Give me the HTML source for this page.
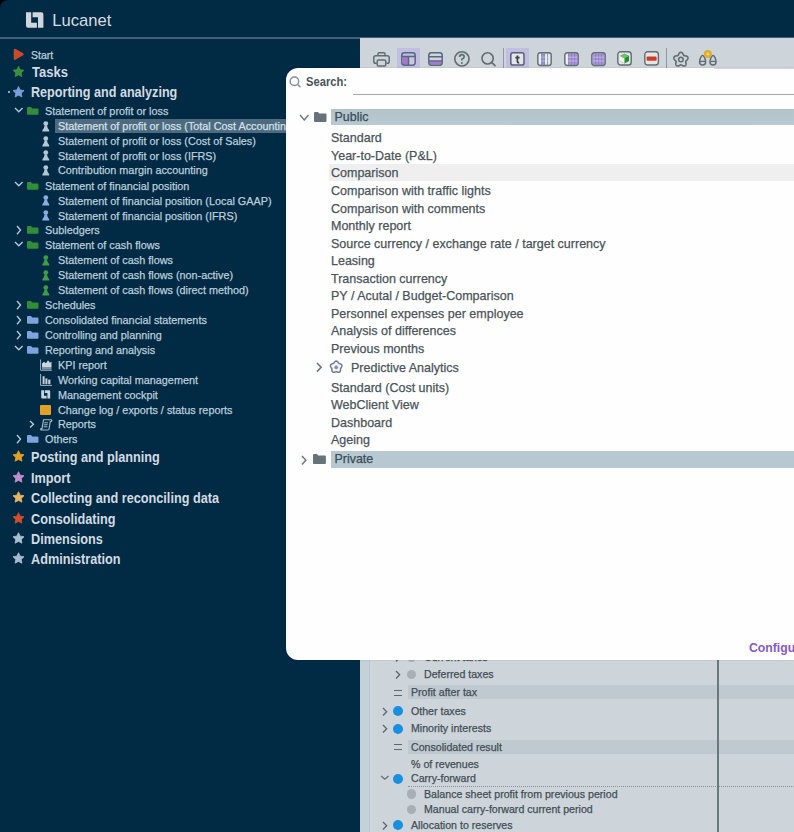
<!DOCTYPE html><html><head><meta charset="utf-8"><style>
html,body{margin:0;padding:0;background:#000;}
body{width:794px;height:832px;overflow:hidden;position:relative;font-family:"Liberation Sans",sans-serif;}
.root{position:absolute;left:0;top:0;width:794px;height:832px;background:#012a44;border-top-left-radius:8px;overflow:hidden;}
.t{position:absolute;white-space:nowrap;-webkit-text-stroke:0.25px currentColor;}
.a{position:absolute;overflow:visible;}
.r{position:absolute;}
</style></head><body><div class="root">
<svg class="a" style="left:25px;top:11px" width="20" height="18" viewBox="0 0 20 18"><path d="M1,1.3 L6.2,1.3 L6.2,11.7 L11.9,11.7 L11.9,16.8 L3,16.8 Q1,16.8 1,14.8 Z" fill="#d0d6db"/><path d="M7.6,1.3 L16.4,1.3 Q18.4,1.3 18.4,3.3 L18.4,16.8 L13,16.8 L13,6.3 L7.6,6.3 Z" fill="#d0d6db"/></svg>
<div class="t" style="left:52.3px;top:11.0px;font-size:16.6px;line-height:20px;color:#d6dde2;font-weight:400;-webkit-text-stroke:0;letter-spacing:0px">Lucanet</div>
<div class="r" style="left:0;top:37px;width:794px;height:1.5px;background:#3e5f77"></div>
<svg class="a" style="left:13px;top:48px" width="12" height="13" viewBox="0 0 12 13"><path d="M1.8,1.8 L9.6,6.3 L1.8,10.8 Z" fill="#c9492b" stroke="#c9492b" stroke-width="2.2" stroke-linejoin="round"/></svg>
<div class="t" style="left:31px;top:47.5px;font-size:10.5px;line-height:15px;color:#bdcfdc;font-weight:400;">Start</div>
<svg class="a" style="left:0;top:0" width="794" height="832"><polygon points="18.50,66.20 20.20,69.65 24.02,70.21 21.26,72.90 21.91,76.69 18.50,74.90 15.09,76.69 15.74,72.90 12.98,70.21 16.80,69.65" fill="#3a9040" stroke="#3a9040" stroke-width="0.8" stroke-linejoin="round"/></svg>
<div class="t" style="left:31.5px;top:62.0px;font-size:14px;line-height:20px;color:#d3dbe1;font-weight:700;-webkit-text-stroke:0;transform:scaleX(0.93);transform-origin:0 0;">Tasks</div>
<svg class="a" style="left:0;top:0" width="794" height="832"><polygon points="18.50,86.50 20.20,89.95 24.02,90.51 21.26,93.20 21.91,96.99 18.50,95.20 15.09,96.99 15.74,93.20 12.98,90.51 16.80,89.95" fill="#7aa0d8" stroke="#7aa0d8" stroke-width="0.8" stroke-linejoin="round"/></svg>
<div class="t" style="left:31px;top:82.0px;font-size:14px;line-height:20px;color:#d3dbe1;font-weight:700;-webkit-text-stroke:0;transform:scaleX(0.9);transform-origin:0 0;">Reporting and analyzing</div>
<div class="r" style="left:8px;top:91px;width:1.5px;height:1.5px;background:#9ab"></div>
<svg class="a" style="left:13.8px;top:106.7px" width="9.6" height="6.2" viewBox="0 0 9.6 6.2"><polyline points="1,1 4.8,4.7 8.6,1" fill="none" stroke="#b4c8d6" stroke-width="1.4"/></svg>
<svg class="a" style="left:26.5px;top:107.1px" width="11.5" height="7.7" viewBox="0 0 11.5 7.7"><path d="M0,1 Q0,0 1,0 L4,0 L5.2,1.5 L10.5,1.5 Q11.5,1.5 11.5,2.5 L11.5,6.7 Q11.5,7.7 10.5,7.7 L1,7.7 Q0,7.7 0,6.7 Z" fill="#308d38"/></svg>
<div class="t" style="left:44.6px;top:103.3px;font-size:11.4px;line-height:16px;color:#bdcfdc;font-weight:400;transform:scaleX(0.95);transform-origin:0 0;">Statement of profit or loss</div>
<div class="r" style="left:55px;top:118.5px;width:240px;height:14.6px;background:#4d6a7f"></div>
<div class="t" style="left:57.9px;top:118.3px;font-size:11.4px;line-height:16px;color:#d3e0ea;font-weight:400;transform:scaleX(0.95);transform-origin:0 0;">Statement of profit or loss (Total Cost Accounting)</div>
<svg class="a" style="left:41.5px;top:120.8px" width="8" height="11" viewBox="0 0 8 11"><circle cx="3.8" cy="2.6" r="2.4" fill="#b3c6d4"/><path d="M2.6,4.6 L5,4.6 Q5.2,7 7.2,9.2 L7.2,10.6 L0.4,10.6 L0.4,9.2 Q2.4,7 2.6,4.6 Z" fill="#b3c6d4"/></svg>
<div class="t" style="left:57.9px;top:133.3px;font-size:11.4px;line-height:16px;color:#bdcfdc;font-weight:400;transform:scaleX(0.95);transform-origin:0 0;">Statement of profit or loss (Cost of Sales)</div>
<svg class="a" style="left:41.5px;top:135.8px" width="8" height="11" viewBox="0 0 8 11"><circle cx="3.8" cy="2.6" r="2.4" fill="#b3c6d4"/><path d="M2.6,4.6 L5,4.6 Q5.2,7 7.2,9.2 L7.2,10.6 L0.4,10.6 L0.4,9.2 Q2.4,7 2.6,4.6 Z" fill="#b3c6d4"/></svg>
<div class="t" style="left:57.9px;top:147.8px;font-size:11.4px;line-height:16px;color:#bdcfdc;font-weight:400;transform:scaleX(0.95);transform-origin:0 0;">Statement of profit or loss (IFRS)</div>
<svg class="a" style="left:41.5px;top:150.3px" width="8" height="11" viewBox="0 0 8 11"><circle cx="3.8" cy="2.6" r="2.4" fill="#b3c6d4"/><path d="M2.6,4.6 L5,4.6 Q5.2,7 7.2,9.2 L7.2,10.6 L0.4,10.6 L0.4,9.2 Q2.4,7 2.6,4.6 Z" fill="#b3c6d4"/></svg>
<div class="t" style="left:57.9px;top:162.3px;font-size:11.4px;line-height:16px;color:#bdcfdc;font-weight:400;transform:scaleX(0.95);transform-origin:0 0;">Contribution margin accounting</div>
<svg class="a" style="left:41.5px;top:164.8px" width="8" height="11" viewBox="0 0 8 11"><circle cx="3.8" cy="2.6" r="2.4" fill="#b3c6d4"/><path d="M2.6,4.6 L5,4.6 Q5.2,7 7.2,9.2 L7.2,10.6 L0.4,10.6 L0.4,9.2 Q2.4,7 2.6,4.6 Z" fill="#b3c6d4"/></svg>
<svg class="a" style="left:13.8px;top:181.2px" width="9.6" height="6.2" viewBox="0 0 9.6 6.2"><polyline points="1,1 4.8,4.7 8.6,1" fill="none" stroke="#b4c8d6" stroke-width="1.4"/></svg>
<svg class="a" style="left:26.5px;top:181.6px" width="11.5" height="7.7" viewBox="0 0 11.5 7.7"><path d="M0,1 Q0,0 1,0 L4,0 L5.2,1.5 L10.5,1.5 Q11.5,1.5 11.5,2.5 L11.5,6.7 Q11.5,7.7 10.5,7.7 L1,7.7 Q0,7.7 0,6.7 Z" fill="#308d38"/></svg>
<div class="t" style="left:44.6px;top:177.8px;font-size:11.4px;line-height:16px;color:#bdcfdc;font-weight:400;transform:scaleX(0.95);transform-origin:0 0;">Statement of financial position</div>
<div class="t" style="left:57.9px;top:192.8px;font-size:11.4px;line-height:16px;color:#bdcfdc;font-weight:400;transform:scaleX(0.95);transform-origin:0 0;">Statement of financial position (Local GAAP)</div>
<svg class="a" style="left:41.5px;top:195.3px" width="8" height="11" viewBox="0 0 8 11"><circle cx="3.8" cy="2.6" r="2.4" fill="#8aaee0"/><path d="M2.6,4.6 L5,4.6 Q5.2,7 7.2,9.2 L7.2,10.6 L0.4,10.6 L0.4,9.2 Q2.4,7 2.6,4.6 Z" fill="#8aaee0"/></svg>
<div class="t" style="left:57.9px;top:207.8px;font-size:11.4px;line-height:16px;color:#bdcfdc;font-weight:400;transform:scaleX(0.95);transform-origin:0 0;">Statement of financial position (IFRS)</div>
<svg class="a" style="left:41.5px;top:210.3px" width="8" height="11" viewBox="0 0 8 11"><circle cx="3.8" cy="2.6" r="2.4" fill="#8aaee0"/><path d="M2.6,4.6 L5,4.6 Q5.2,7 7.2,9.2 L7.2,10.6 L0.4,10.6 L0.4,9.2 Q2.4,7 2.6,4.6 Z" fill="#8aaee0"/></svg>
<svg class="a" style="left:16.0px;top:225.2px" width="6.0" height="10.2" viewBox="0 0 6.0 10.2"><polyline points="1,1 4.5,5.1 1,9.2" fill="none" stroke="#b4c8d6" stroke-width="1.4"/></svg>
<svg class="a" style="left:26.5px;top:226.1px" width="11.5" height="7.7" viewBox="0 0 11.5 7.7"><path d="M0,1 Q0,0 1,0 L4,0 L5.2,1.5 L10.5,1.5 Q11.5,1.5 11.5,2.5 L11.5,6.7 Q11.5,7.7 10.5,7.7 L1,7.7 Q0,7.7 0,6.7 Z" fill="#308d38"/></svg>
<div class="t" style="left:44.6px;top:222.3px;font-size:11.4px;line-height:16px;color:#bdcfdc;font-weight:400;transform:scaleX(0.95);transform-origin:0 0;">Subledgers</div>
<svg class="a" style="left:13.8px;top:240.7px" width="9.6" height="6.2" viewBox="0 0 9.6 6.2"><polyline points="1,1 4.8,4.7 8.6,1" fill="none" stroke="#b4c8d6" stroke-width="1.4"/></svg>
<svg class="a" style="left:26.5px;top:241.1px" width="11.5" height="7.7" viewBox="0 0 11.5 7.7"><path d="M0,1 Q0,0 1,0 L4,0 L5.2,1.5 L10.5,1.5 Q11.5,1.5 11.5,2.5 L11.5,6.7 Q11.5,7.7 10.5,7.7 L1,7.7 Q0,7.7 0,6.7 Z" fill="#308d38"/></svg>
<div class="t" style="left:44.6px;top:237.3px;font-size:11.4px;line-height:16px;color:#bdcfdc;font-weight:400;transform:scaleX(0.95);transform-origin:0 0;">Statement of cash flows</div>
<div class="t" style="left:57.9px;top:252.3px;font-size:11.4px;line-height:16px;color:#bdcfdc;font-weight:400;transform:scaleX(0.95);transform-origin:0 0;">Statement of cash flows</div>
<svg class="a" style="left:41.5px;top:254.8px" width="8" height="11" viewBox="0 0 8 11"><circle cx="3.8" cy="2.6" r="2.4" fill="#3e9e46"/><path d="M2.6,4.6 L5,4.6 Q5.2,7 7.2,9.2 L7.2,10.6 L0.4,10.6 L0.4,9.2 Q2.4,7 2.6,4.6 Z" fill="#3e9e46"/></svg>
<div class="t" style="left:57.9px;top:267.3px;font-size:11.4px;line-height:16px;color:#bdcfdc;font-weight:400;transform:scaleX(0.95);transform-origin:0 0;">Statement of cash flows (non-active)</div>
<svg class="a" style="left:41.5px;top:269.8px" width="8" height="11" viewBox="0 0 8 11"><circle cx="3.8" cy="2.6" r="2.4" fill="#3e9e46"/><path d="M2.6,4.6 L5,4.6 Q5.2,7 7.2,9.2 L7.2,10.6 L0.4,10.6 L0.4,9.2 Q2.4,7 2.6,4.6 Z" fill="#3e9e46"/></svg>
<div class="t" style="left:57.9px;top:282.3px;font-size:11.4px;line-height:16px;color:#bdcfdc;font-weight:400;transform:scaleX(0.95);transform-origin:0 0;">Statement of cash flows (direct method)</div>
<svg class="a" style="left:41.5px;top:284.8px" width="8" height="11" viewBox="0 0 8 11"><circle cx="3.8" cy="2.6" r="2.4" fill="#3e9e46"/><path d="M2.6,4.6 L5,4.6 Q5.2,7 7.2,9.2 L7.2,10.6 L0.4,10.6 L0.4,9.2 Q2.4,7 2.6,4.6 Z" fill="#3e9e46"/></svg>
<svg class="a" style="left:16.0px;top:299.7px" width="6.0" height="10.2" viewBox="0 0 6.0 10.2"><polyline points="1,1 4.5,5.1 1,9.2" fill="none" stroke="#b4c8d6" stroke-width="1.4"/></svg>
<svg class="a" style="left:26.5px;top:300.6px" width="11.5" height="7.7" viewBox="0 0 11.5 7.7"><path d="M0,1 Q0,0 1,0 L4,0 L5.2,1.5 L10.5,1.5 Q11.5,1.5 11.5,2.5 L11.5,6.7 Q11.5,7.7 10.5,7.7 L1,7.7 Q0,7.7 0,6.7 Z" fill="#308d38"/></svg>
<div class="t" style="left:44.6px;top:296.8px;font-size:11.4px;line-height:16px;color:#bdcfdc;font-weight:400;transform:scaleX(0.95);transform-origin:0 0;">Schedules</div>
<svg class="a" style="left:16.0px;top:314.7px" width="6.0" height="10.2" viewBox="0 0 6.0 10.2"><polyline points="1,1 4.5,5.1 1,9.2" fill="none" stroke="#b4c8d6" stroke-width="1.4"/></svg>
<svg class="a" style="left:26.5px;top:315.6px" width="11.5" height="7.7" viewBox="0 0 11.5 7.7"><path d="M0,1 Q0,0 1,0 L4,0 L5.2,1.5 L10.5,1.5 Q11.5,1.5 11.5,2.5 L11.5,6.7 Q11.5,7.7 10.5,7.7 L1,7.7 Q0,7.7 0,6.7 Z" fill="#7fa4dd"/></svg>
<div class="t" style="left:44.6px;top:311.8px;font-size:11.4px;line-height:16px;color:#bdcfdc;font-weight:400;transform:scaleX(0.95);transform-origin:0 0;">Consolidated financial statements</div>
<svg class="a" style="left:16.0px;top:329.7px" width="6.0" height="10.2" viewBox="0 0 6.0 10.2"><polyline points="1,1 4.5,5.1 1,9.2" fill="none" stroke="#b4c8d6" stroke-width="1.4"/></svg>
<svg class="a" style="left:26.5px;top:330.6px" width="11.5" height="7.7" viewBox="0 0 11.5 7.7"><path d="M0,1 Q0,0 1,0 L4,0 L5.2,1.5 L10.5,1.5 Q11.5,1.5 11.5,2.5 L11.5,6.7 Q11.5,7.7 10.5,7.7 L1,7.7 Q0,7.7 0,6.7 Z" fill="#7fa4dd"/></svg>
<div class="t" style="left:44.6px;top:326.8px;font-size:11.4px;line-height:16px;color:#bdcfdc;font-weight:400;transform:scaleX(0.95);transform-origin:0 0;">Controlling and planning</div>
<svg class="a" style="left:13.8px;top:345.2px" width="9.6" height="6.2" viewBox="0 0 9.6 6.2"><polyline points="1,1 4.8,4.7 8.6,1" fill="none" stroke="#b4c8d6" stroke-width="1.4"/></svg>
<svg class="a" style="left:26.5px;top:345.6px" width="11.5" height="7.7" viewBox="0 0 11.5 7.7"><path d="M0,1 Q0,0 1,0 L4,0 L5.2,1.5 L10.5,1.5 Q11.5,1.5 11.5,2.5 L11.5,6.7 Q11.5,7.7 10.5,7.7 L1,7.7 Q0,7.7 0,6.7 Z" fill="#7fa4dd"/></svg>
<div class="t" style="left:44.6px;top:341.8px;font-size:11.4px;line-height:16px;color:#bdcfdc;font-weight:400;transform:scaleX(0.95);transform-origin:0 0;">Reporting and analysis</div>
<div class="t" style="left:57.9px;top:356.8px;font-size:11.4px;line-height:16px;color:#bdcfdc;font-weight:400;transform:scaleX(0.95);transform-origin:0 0;">KPI report</div>
<svg class="a" style="left:39.5px;top:359.0px" width="12" height="12" viewBox="0 0 12 12"><path d="M0.6,0.5 L0.6,11.3 L11.8,11.3" fill="none" stroke="#9fb3c2" stroke-width="1"/><path d="M2,8 L2,4.5 L4,2.8 L6,4.2 L8,1.2 L10,3.8 L11.5,2.6 L11.5,8 Z" fill="#cad7e0"/><rect x="2" y="8" width="9.5" height="2.6" fill="#7f95a6"/></svg>
<div class="t" style="left:57.9px;top:371.8px;font-size:11.4px;line-height:16px;color:#bdcfdc;font-weight:400;transform:scaleX(0.95);transform-origin:0 0;">Working capital management</div>
<svg class="a" style="left:39.5px;top:374.0px" width="12" height="12" viewBox="0 0 12 12"><path d="M0.6,0 L0.6,11.4 L12,11.4" fill="none" stroke="#9fb3c2" stroke-width="1"/><rect x="2.6" y="2.2" width="2" height="8" fill="#c3d2dc"/><rect x="5.4" y="4.4" width="2" height="5.8" fill="#c3d2dc"/><rect x="8.2" y="5.6" width="2.2" height="4.6" fill="#c3d2dc"/></svg>
<div class="t" style="left:57.9px;top:386.8px;font-size:11.4px;line-height:16px;color:#bdcfdc;font-weight:400;transform:scaleX(0.95);transform-origin:0 0;">Management cockpit</div>
<svg class="a" style="left:41px;top:390.3px" width="9.5" height="9" viewBox="0 0 9.5 9"><path d="M0.2,0.2 L3,0.2 L3,5.8 L5.6,5.8 L5.6,8.6 L1.2,8.6 Q0.2,8.6 0.2,7.6 Z" fill="#c6d4de"/><path d="M3.8,0.2 L8.2,0.2 Q9.2,0.2 9.2,1.2 L9.2,8.6 L6.4,8.6 L6.4,3 L3.8,3 Z" fill="#c6d4de"/></svg>
<div class="t" style="left:57.9px;top:401.8px;font-size:11.4px;line-height:16px;color:#bdcfdc;font-weight:400;transform:scaleX(0.95);transform-origin:0 0;">Change log / exports / status reports</div>
<div class="r" style="left:40.3px;top:404.5px;width:10.4px;height:10px;background:#e1a126;border-radius:1px"></div>
<svg class="a" style="left:29px;top:419.7px" width="6" height="8.5" viewBox="0 0 6 8.5"><polyline points="1,1 4.5,4.25 1,7.5" fill="none" stroke="#bdcfdc" stroke-width="1.3"/></svg>
<div class="t" style="left:57.9px;top:416.3px;font-size:11.4px;line-height:16px;color:#bdcfdc;font-weight:400;transform:scaleX(0.95);transform-origin:0 0;">Reports</div>
<svg class="a" style="left:39.5px;top:418.5px" width="13" height="12" viewBox="0 0 13 12"><path d="M3.5,0.8 L11.5,0.8 Q12.3,1.5 11.3,2.5 L10.3,2.5 L9,10.2 Q8.5,11 7.5,11 L1,11 Q0.3,10.5 1,9.6 L2,9.6 Z" fill="none" stroke="#a9bccb" stroke-width="1.1"/><path d="M4.2,3.8 L8,3.8 M3.9,5.8 L7.7,5.8 M3.6,7.8 L7.4,7.8" stroke="#a9bccb" stroke-width="1"/></svg>
<svg class="a" style="left:16.0px;top:434.2px" width="6.0" height="10.2" viewBox="0 0 6.0 10.2"><polyline points="1,1 4.5,5.1 1,9.2" fill="none" stroke="#b4c8d6" stroke-width="1.4"/></svg>
<svg class="a" style="left:26.5px;top:435.1px" width="11.5" height="7.7" viewBox="0 0 11.5 7.7"><path d="M0,1 Q0,0 1,0 L4,0 L5.2,1.5 L10.5,1.5 Q11.5,1.5 11.5,2.5 L11.5,6.7 Q11.5,7.7 10.5,7.7 L1,7.7 Q0,7.7 0,6.7 Z" fill="#7fa4dd"/></svg>
<div class="t" style="left:44.6px;top:431.3px;font-size:11.4px;line-height:16px;color:#bdcfdc;font-weight:400;transform:scaleX(0.95);transform-origin:0 0;">Others</div>
<svg class="a" style="left:0;top:0" width="794" height="832"><polygon points="18.50,450.70 20.20,454.15 24.02,454.71 21.26,457.40 21.91,461.19 18.50,459.40 15.09,461.19 15.74,457.40 12.98,454.71 16.80,454.15" fill="#e3a124" stroke="#e3a124" stroke-width="0.8" stroke-linejoin="round"/></svg>
<div class="t" style="left:31px;top:446.5px;font-size:14px;line-height:20px;color:#d3dbe1;font-weight:700;-webkit-text-stroke:0;transform:scaleX(0.905);transform-origin:0 0;">Posting and planning</div>
<svg class="a" style="left:0;top:0" width="794" height="832"><polygon points="18.50,471.70 20.20,475.15 24.02,475.71 21.26,478.40 21.91,482.19 18.50,480.40 15.09,482.19 15.74,478.40 12.98,475.71 16.80,475.15" fill="#c18fca" stroke="#c18fca" stroke-width="0.8" stroke-linejoin="round"/></svg>
<div class="t" style="left:31px;top:467.5px;font-size:14px;line-height:20px;color:#d3dbe1;font-weight:700;-webkit-text-stroke:0;transform:scaleX(0.905);transform-origin:0 0;">Import</div>
<svg class="a" style="left:0;top:0" width="794" height="832"><polygon points="18.50,491.70 20.20,495.15 24.02,495.71 21.26,498.40 21.91,502.19 18.50,500.40 15.09,502.19 15.74,498.40 12.98,495.71 16.80,495.15" fill="#e9b366" stroke="#e9b366" stroke-width="0.8" stroke-linejoin="round"/></svg>
<div class="t" style="left:31px;top:487.5px;font-size:14px;line-height:20px;color:#d3dbe1;font-weight:700;-webkit-text-stroke:0;transform:scaleX(0.905);transform-origin:0 0;">Collecting and reconciling data</div>
<svg class="a" style="left:0;top:0" width="794" height="832"><polygon points="18.50,512.70 20.20,516.15 24.02,516.71 21.26,519.40 21.91,523.19 18.50,521.40 15.09,523.19 15.74,519.40 12.98,516.71 16.80,516.15" fill="#d44d2b" stroke="#d44d2b" stroke-width="0.8" stroke-linejoin="round"/></svg>
<div class="t" style="left:31px;top:508.5px;font-size:14px;line-height:20px;color:#d3dbe1;font-weight:700;-webkit-text-stroke:0;transform:scaleX(0.905);transform-origin:0 0;">Consolidating</div>
<svg class="a" style="left:0;top:0" width="794" height="832"><polygon points="18.50,532.70 20.20,536.15 24.02,536.71 21.26,539.40 21.91,543.19 18.50,541.40 15.09,543.19 15.74,539.40 12.98,536.71 16.80,536.15" fill="#a9c0d0" stroke="#a9c0d0" stroke-width="0.8" stroke-linejoin="round"/></svg>
<div class="t" style="left:31px;top:528.5px;font-size:14px;line-height:20px;color:#d3dbe1;font-weight:700;-webkit-text-stroke:0;transform:scaleX(0.905);transform-origin:0 0;">Dimensions</div>
<svg class="a" style="left:0;top:0" width="794" height="832"><polygon points="18.50,552.70 20.20,556.15 24.02,556.71 21.26,559.40 21.91,563.19 18.50,561.40 15.09,563.19 15.74,559.40 12.98,556.71 16.80,556.15" fill="#a9b9d2" stroke="#a9b9d2" stroke-width="0.8" stroke-linejoin="round"/></svg>
<div class="t" style="left:31px;top:548.5px;font-size:14px;line-height:20px;color:#d3dbe1;font-weight:700;-webkit-text-stroke:0;transform:scaleX(0.905);transform-origin:0 0;">Administration</div>
<div class="r" style="left:360px;top:38px;width:434px;height:794px;background:#cdd5da"></div>
<div class="r" style="left:360px;top:70px;width:9px;height:762px;background:#c3d1d8"></div>
<div class="r" style="left:368.5px;top:70px;width:1px;height:762px;background:#b9c6cd"></div>
<div class="r" style="left:397.2px;top:47.5px;width:22.80000000000001px;height:22px;background:#c0bfe2"></div>
<div class="r" style="left:506px;top:47.5px;width:23px;height:22px;background:#c0bfe2"></div>
<svg class="a" style="left:373px;top:52px" width="17" height="15" viewBox="0 0 17 15"><path d="M5,3.6 L5,2 Q5,0.8 6.2,0.8 L10.8,0.8 Q12,0.8 12,2 L12,3.6" fill="none" stroke="#626c71" stroke-width="1.5"/><path d="M3.6,11.2 L2.6,11.2 Q0.8,11.2 0.8,9.4 L0.8,5.6 Q0.8,3.7 2.8,3.7 L14.2,3.7 Q16.2,3.7 16.2,5.6 L16.2,9.4 Q16.2,11.2 14.4,11.2 L13.4,11.2" fill="none" stroke="#626c71" stroke-width="1.5"/><rect x="4.2" y="8" width="8.6" height="5.9" rx="1.2" fill="none" stroke="#626c71" stroke-width="1.5"/></svg>
<svg class="a" style="left:401px;top:52px" width="15" height="14" viewBox="0 0 15 14"><rect x="2" y="5" width="5.5" height="8" fill="#a678cc"/><rect x="7.5" y="5" width="5.5" height="8" fill="#c9c7e2"/><rect x="0.8" y="0.8" width="13.4" height="12.4" rx="2.6" fill="none" stroke="#5b6780" stroke-width="1.5"/><path d="M0.8,4.6 L14.2,4.6 M7.5,4.6 L7.5,13" stroke="#5b6780" stroke-width="1.5"/></svg>
<svg class="a" style="left:428px;top:52px" width="15" height="14" viewBox="0 0 15 14"><rect x="1.5" y="9.5" width="12" height="3" fill="#a678cc"/><rect x="0.8" y="0.8" width="13.4" height="12.4" rx="2.6" fill="none" stroke="#5b6780" stroke-width="1.5"/><path d="M0.8,4.8 L14.2,4.8 M0.8,9 L14.2,9" stroke="#5b6780" stroke-width="1.5"/></svg>
<svg class="a" style="left:453px;top:50px" width="18" height="18" viewBox="0 0 18 18"><circle cx="8.9" cy="8.9" r="7.1" fill="none" stroke="#626c71" stroke-width="1.6"/><path d="M6.6,7 Q6.6,4.6 8.9,4.6 Q11.2,4.6 11.2,6.8 Q11.2,8.3 8.9,9.2 L8.9,10.6" fill="none" stroke="#626c71" stroke-width="1.7"/><circle cx="8.9" cy="13" r="1" fill="#626c71"/></svg>
<svg class="a" style="left:480px;top:51px" width="17" height="17" viewBox="0 0 17 17"><circle cx="7.6" cy="7.4" r="5.6" fill="none" stroke="#626c71" stroke-width="1.6"/><path d="M11.6,11.4 L15,14.6" stroke="#626c71" stroke-width="1.7" stroke-linecap="round"/></svg>
<div class="r" style="left:502.8px;top:48px;width:1px;height:20px;background:#8d999f"></div>
<svg class="a" style="left:509.5px;top:52px" width="15" height="14" viewBox="0 0 15 14"><rect x="0.8" y="0.8" width="13.2" height="12.3" rx="2.2" fill="#e4e6ee" stroke="#58626c" stroke-width="1.5"/><path d="M7.4,3.4 L7.4,9.8 Q7.4,10.8 9.2,10.8 M5.4,5.6 L9.6,5.6" fill="none" stroke="#3a434a" stroke-width="1.7"/></svg>
<svg class="a" style="left:537px;top:51.9px" width="15" height="14.3" viewBox="0 0 15 14.3"><rect x="1.60" y="1.6" width="3.0" height="11.1" fill="#e8ecf0"/><rect x="4.60" y="1.6" width="3.0" height="11.1" fill="#8f92e0"/><rect x="7.60" y="1.6" width="3.0" height="11.1" fill="#e8ecf0"/><rect x="10.60" y="1.6" width="3.0" height="11.1" fill="#e8ecf0"/><path d="M4.60,1.4 L4.60,12.9" stroke="#7a7e90" stroke-width="0.8"/><path d="M7.60,1.4 L7.60,12.9" stroke="#7a7e90" stroke-width="0.8"/><path d="M10.60,1.4 L10.60,12.9" stroke="#7a7e90" stroke-width="0.8"/><path d="M1.4,5.2 L13.6,5.2 M1.4,9 L13.6,9" stroke="#ffffff" stroke-opacity="0.45" stroke-width="0.8"/><rect x="0.8" y="0.8" width="13.4" height="12.7" rx="2.4" fill="none" stroke="#656c78" stroke-width="1.4"/></svg>
<svg class="a" style="left:563.8px;top:51.9px" width="15" height="14.3" viewBox="0 0 15 14.3"><rect x="1.60" y="1.6" width="3.0" height="11.1" fill="#e8ecf0"/><rect x="4.60" y="1.6" width="3.0" height="11.1" fill="#ad8fe6"/><rect x="7.60" y="1.6" width="3.0" height="11.1" fill="#ad8fe6"/><rect x="10.60" y="1.6" width="3.0" height="11.1" fill="#ad8fe6"/><path d="M4.60,1.4 L4.60,12.9" stroke="#7a7e90" stroke-width="0.8"/><path d="M7.60,1.4 L7.60,12.9" stroke="#7a7e90" stroke-width="0.8"/><path d="M10.60,1.4 L10.60,12.9" stroke="#7a7e90" stroke-width="0.8"/><path d="M1.4,5.2 L13.6,5.2 M1.4,9 L13.6,9" stroke="#ffffff" stroke-opacity="0.45" stroke-width="0.8"/><rect x="0.8" y="0.8" width="13.4" height="12.7" rx="2.4" fill="none" stroke="#656c78" stroke-width="1.4"/></svg>
<svg class="a" style="left:590.7px;top:51.9px" width="15" height="14.3" viewBox="0 0 15 14.3"><rect x="1.60" y="1.6" width="3.0" height="11.1" fill="#a693e2"/><rect x="4.60" y="1.6" width="3.0" height="11.1" fill="#a693e2"/><rect x="7.60" y="1.6" width="3.0" height="11.1" fill="#a693e2"/><rect x="10.60" y="1.6" width="3.0" height="11.1" fill="#a693e2"/><path d="M4.60,1.4 L4.60,12.9" stroke="#7a7e90" stroke-width="0.8"/><path d="M7.60,1.4 L7.60,12.9" stroke="#7a7e90" stroke-width="0.8"/><path d="M10.60,1.4 L10.60,12.9" stroke="#7a7e90" stroke-width="0.8"/><path d="M1.4,5.2 L13.6,5.2 M1.4,9 L13.6,9" stroke="#ffffff" stroke-opacity="0.45" stroke-width="0.8"/><rect x="0.8" y="0.8" width="13.4" height="12.7" rx="2.4" fill="none" stroke="#656c78" stroke-width="1.4"/></svg>
<svg class="a" style="left:617.2px;top:51.4px" width="15" height="15" viewBox="0 0 15 15"><rect x="0.8" y="0.8" width="13.4" height="13.2" rx="2.8" fill="#e3e6e6" stroke="#626c71" stroke-width="1.4"/><path d="M7.5,2.8 L12,5.1 L12,10.1 L7.5,12.4 L3,10.1 L3,5.1 Z" fill="#27893a"/><path d="M7.5,2.8 L12,5.1 L7.5,7.4 L3,5.1 Z" fill="#6cbf72"/><path d="M7.5,7.4 L7.5,12.4 L3,10.1 L3,5.1 Z" fill="#eef6ee"/></svg>
<svg class="a" style="left:644px;top:51.4px" width="15.2" height="15" viewBox="0 0 15.2 15"><rect x="0.8" y="0.8" width="13.6" height="13.2" rx="2.8" fill="#e6e6e6" stroke="#626c71" stroke-width="1.4"/><rect x="2.6" y="5.6" width="10" height="4.2" rx="1" fill="#cf3b26"/></svg>
<div class="r" style="left:665.5px;top:48px;width:1px;height:20px;background:#8d999f"></div>
<svg class="a" style="left:671.5px;top:50.5px" width="18" height="17" viewBox="0 0 18 17"><path d="M8.90,1.30 L9.38,1.37 L9.84,1.59 L10.25,1.93 L10.60,2.35 L10.90,2.81 L11.14,3.28 L11.36,3.72 L11.56,4.09 L11.79,4.38 L12.06,4.58 L12.39,4.72 L12.79,4.81 L13.26,4.88 L13.78,4.96 L14.31,5.09 L14.83,5.28 L15.29,5.55 L15.66,5.90 L15.91,6.32 L16.01,6.79 L15.97,7.29 L15.81,7.79 L15.53,8.27 L15.19,8.70 L14.82,9.09 L14.47,9.43 L14.16,9.75 L13.94,10.05 L13.81,10.37 L13.76,10.71 L13.79,11.11 L13.87,11.57 L13.95,12.07 L14.01,12.62 L14.00,13.17 L13.90,13.70 L13.70,14.18 L13.40,14.56 L13.00,14.84 L12.53,14.98 L12.01,15.00 L11.47,14.90 L10.95,14.72 L10.45,14.50 L10.01,14.26 L9.61,14.06 L9.24,13.93 L8.90,13.88 L8.56,13.93 L8.19,14.06 L7.79,14.26 L7.35,14.50 L6.85,14.72 L6.33,14.90 L5.79,15.00 L5.27,14.98 L4.80,14.84 L4.40,14.56 L4.10,14.18 L3.90,13.70 L3.80,13.17 L3.79,12.62 L3.85,12.07 L3.93,11.57 L4.01,11.11 L4.04,10.71 L3.99,10.37 L3.86,10.05 L3.64,9.75 L3.33,9.43 L2.98,9.09 L2.61,8.70 L2.27,8.27 L1.99,7.79 L1.83,7.29 L1.79,6.79 L1.89,6.32 L2.14,5.90 L2.51,5.55 L2.97,5.28 L3.49,5.09 L4.02,4.96 L4.54,4.88 L5.01,4.81 L5.41,4.72 L5.74,4.58 L6.01,4.38 L6.24,4.09 L6.44,3.72 L6.66,3.28 L6.90,2.81 L7.20,2.35 L7.55,1.93 L7.96,1.59 L8.42,1.37 L8.90,1.30Z" fill="none" stroke="#626c71" stroke-width="1.6" stroke-linejoin="round"/><circle cx="8.9" cy="8.5" r="2.3" fill="none" stroke="#626c71" stroke-width="1.5"/></svg>
<svg class="a" style="left:696.5px;top:47px" width="22" height="21" viewBox="0 0 22 21"><path d="M5.6,8.5 C7.3999999999999995,8.5 8.6,12.899999999999999 8.6,14.899999999999999 A3.0,3 0 0 1 2.5999999999999996,14.899999999999999 C2.5999999999999996,12.899999999999999 3.8,8.5 5.6,8.5 Z" fill="none" stroke="#626c71" stroke-width="1.5"/><path d="M16.0,8.5 C17.8,8.5 19.0,12.899999999999999 19.0,14.899999999999999 A3.0,3 0 0 1 13.0,14.899999999999999 C13.0,12.899999999999999 14.2,8.5 16.0,8.5 Z" fill="none" stroke="#626c71" stroke-width="1.5"/><path d="M2.6,14.4 L8.6,14.4 M13,14.4 L19,14.4" stroke="#626c71" stroke-width="1.3"/><circle cx="10.9" cy="6.9" r="4" fill="#e0ad30"/><circle cx="10.9" cy="6.9" r="1.6" fill="#f0cf70"/></svg>
<div class="r" style="left:407.6px;top:685.4px;width:387px;height:13.6px;background:#bfcad0"></div>
<div class="r" style="left:407.6px;top:740.4px;width:387px;height:13.6px;background:#bfcad0"></div>
<svg class="a" style="left:395px;top:652.5px" width="6.2" height="9.5" viewBox="0 0 6.2 9.5"><polyline points="1,1 4.7,4.75 1,8.5" fill="none" stroke="#5c666c" stroke-width="1.3"/></svg>
<div class="r" style="left:406.9px;top:652.4px;width:9.2px;height:9.2px;border-radius:50%;background:#a9b0b5"></div>
<div class="t" style="left:424px;top:649.5px;font-size:11px;line-height:15px;color:#434d54;font-weight:400;transform:scaleX(0.965);transform-origin:0 0;">Current taxes</div>
<svg class="a" style="left:395px;top:670.1px" width="6.2" height="9.5" viewBox="0 0 6.2 9.5"><polyline points="1,1 4.7,4.75 1,8.5" fill="none" stroke="#5c666c" stroke-width="1.3"/></svg>
<div class="r" style="left:406.9px;top:670.0px;width:9.2px;height:9.2px;border-radius:50%;background:#a9b0b5"></div>
<div class="t" style="left:424px;top:667.1px;font-size:11px;line-height:15px;color:#434d54;font-weight:400;transform:scaleX(0.965);transform-origin:0 0;">Deferred taxes</div>
<div class="r" style="left:394.3px;top:689.5px;width:8px;height:1.3px;background:#5c666c"></div><div class="r" style="left:394.3px;top:694.5px;width:8px;height:1.3px;background:#5c666c"></div>
<div class="t" style="left:410.5px;top:685.3px;font-size:11px;line-height:15px;color:#434d54;font-weight:400;transform:scaleX(0.965);transform-origin:0 0;">Profit after tax</div>
<svg class="a" style="left:381.5px;top:706.5px" width="6.2" height="9.5" viewBox="0 0 6.2 9.5"><polyline points="1,1 4.7,4.75 1,8.5" fill="none" stroke="#5c666c" stroke-width="1.3"/></svg>
<div class="r" style="left:393px;top:706px;width:10px;height:10px;border-radius:50%;background:#1a8fe0"></div>
<div class="t" style="left:410.5px;top:703.5px;font-size:11px;line-height:15px;color:#434d54;font-weight:400;transform:scaleX(0.965);transform-origin:0 0;">Other taxes</div>
<svg class="a" style="left:381.5px;top:724.3px" width="6.2" height="9.5" viewBox="0 0 6.2 9.5"><polyline points="1,1 4.7,4.75 1,8.5" fill="none" stroke="#5c666c" stroke-width="1.3"/></svg>
<div class="r" style="left:393px;top:723.8px;width:10px;height:10px;border-radius:50%;background:#1a8fe0"></div>
<div class="t" style="left:410.5px;top:721.3px;font-size:11px;line-height:15px;color:#434d54;font-weight:400;transform:scaleX(0.965);transform-origin:0 0;">Minority interests</div>
<div class="r" style="left:394.3px;top:744px;width:8px;height:1.3px;background:#5c666c"></div><div class="r" style="left:394.3px;top:749px;width:8px;height:1.3px;background:#5c666c"></div>
<div class="t" style="left:410.5px;top:739.5px;font-size:11px;line-height:15px;color:#434d54;font-weight:400;transform:scaleX(0.965);transform-origin:0 0;">Consolidated result</div>
<div class="t" style="left:410.5px;top:756.5px;font-size:11px;line-height:15px;color:#434d54;font-weight:400;transform:scaleX(0.965);transform-origin:0 0;">% of revenues</div>
<svg class="a" style="left:380.2px;top:775.4px" width="9.6" height="5.6" viewBox="0 0 9.6 5.6"><polyline points="1,1 4.8,4.1 8.6,1" fill="none" stroke="#6a7378" stroke-width="1.3"/></svg>
<div class="r" style="left:393px;top:773.6px;width:10px;height:10px;border-radius:50%;background:#1a8fe0"></div>
<div class="t" style="left:410.5px;top:771.1px;font-size:11px;line-height:15px;color:#434d54;font-weight:400;transform:scaleX(0.965);transform-origin:0 0;">Carry-forward</div>
<div class="r" style="left:408px;top:785.5px;width:386px;height:0;border-top:1px dotted #8a9398"></div>
<div class="r" style="left:406.9px;top:789.4px;width:9.2px;height:9.2px;border-radius:50%;background:#a9b0b5"></div>
<div class="t" style="left:424px;top:786.5px;font-size:11px;line-height:15px;color:#434d54;font-weight:400;transform:scaleX(0.965);transform-origin:0 0;">Balance sheet profit from previous period</div>
<div class="r" style="left:406.9px;top:804.6px;width:9.2px;height:9.2px;border-radius:50%;background:#a9b0b5"></div>
<div class="t" style="left:424px;top:801.7px;font-size:11px;line-height:15px;color:#434d54;font-weight:400;transform:scaleX(0.965);transform-origin:0 0;">Manual carry-forward current period</div>
<svg class="a" style="left:381.5px;top:820.8px" width="6.2" height="9.5" viewBox="0 0 6.2 9.5"><polyline points="1,1 4.7,4.75 1,8.5" fill="none" stroke="#5c666c" stroke-width="1.3"/></svg>
<div class="r" style="left:393px;top:820.3px;width:10px;height:10px;border-radius:50%;background:#1a8fe0"></div>
<div class="t" style="left:410.5px;top:817.8px;font-size:11px;line-height:15px;color:#434d54;font-weight:400;transform:scaleX(0.965);transform-origin:0 0;">Allocation to reserves</div>
<div class="r" style="left:717.2px;top:600px;width:1.5px;height:232px;background:#6c777c"></div>
<div class="r" style="left:286px;top:67.8px;width:520px;height:592px;background:#fefefe;border-radius:12px;box-shadow:0 0 2px rgba(0,0,0,0.15)"></div>
<div class="r" style="left:714px;top:68px;width:80px;height:1px;background:#dccdf0"></div>
<svg class="a" style="left:288.5px;top:76px" width="13" height="12" viewBox="0 0 13 12"><circle cx="5.4" cy="5.2" r="4.3" fill="none" stroke="#8a9094" stroke-width="1.5"/><path d="M8.5,8.3 L11.5,11.3" stroke="#8a9094" stroke-width="1.5"/></svg>
<div class="t" style="left:306.4px;top:72.5px;font-size:13px;line-height:18px;color:#4a5258;font-weight:700;-webkit-text-stroke:0;transform:scaleX(0.86);transform-origin:0 0;">Search:</div>
<div class="r" style="left:352.8px;top:93.7px;width:442px;height:1px;background:#a6a6a6"></div>
<svg class="a" style="left:298.5px;top:113.5px" width="10.5" height="7.5" viewBox="0 0 10.5 7.5"><polyline points="1,1 5.25,6.0 9.5,1" fill="none" stroke="#6b757b" stroke-width="1.4"/></svg>
<svg class="a" style="left:313.5px;top:112px" width="12.5" height="10" viewBox="0 0 12.5 10"><path d="M0,1 Q0,0 1,0 L4,0 L5.2,1.5 L11.5,1.5 Q12.5,1.5 12.5,2.5 L12.5,9 Q12.5,10 11.5,10 L1,10 Q0,10 0,9 Z" fill="#66737b"/></svg>
<div class="r" style="left:331.2px;top:108.6px;width:463px;height:16.6px;background:linear-gradient(#b3c3c8,#b7c9d2)"></div>
<div class="t" style="left:334.6px;top:108.5px;font-size:12.4px;line-height:17px;color:#3a4c58;font-weight:400;">Public</div>
<div class="r" style="left:329px;top:163.5px;width:465px;height:17px;background:#efefef"></div>
<div class="t" style="left:331px;top:129.0px;font-size:13px;line-height:18px;color:#4a5359;font-weight:400;transform:scaleX(0.962);transform-origin:0 0;">Standard</div>
<div class="t" style="left:331px;top:147.0px;font-size:13px;line-height:18px;color:#4a5359;font-weight:400;transform:scaleX(0.962);transform-origin:0 0;">Year-to-Date (P&amp;L)</div>
<div class="t" style="left:331px;top:164.0px;font-size:13px;line-height:18px;color:#4a5359;font-weight:400;transform:scaleX(0.962);transform-origin:0 0;">Comparison</div>
<div class="t" style="left:331px;top:182.0px;font-size:13px;line-height:18px;color:#4a5359;font-weight:400;transform:scaleX(0.962);transform-origin:0 0;">Comparison with traffic lights</div>
<div class="t" style="left:331px;top:199.5px;font-size:13px;line-height:18px;color:#4a5359;font-weight:400;transform:scaleX(0.962);transform-origin:0 0;">Comparison with comments</div>
<div class="t" style="left:331px;top:217.0px;font-size:13px;line-height:18px;color:#4a5359;font-weight:400;transform:scaleX(0.962);transform-origin:0 0;">Monthly report</div>
<div class="t" style="left:331px;top:234.5px;font-size:13px;line-height:18px;color:#4a5359;font-weight:400;transform:scaleX(0.962);transform-origin:0 0;">Source currency / exchange rate / target currency</div>
<div class="t" style="left:331px;top:252.0px;font-size:13px;line-height:18px;color:#4a5359;font-weight:400;transform:scaleX(0.962);transform-origin:0 0;">Leasing</div>
<div class="t" style="left:331px;top:269.5px;font-size:13px;line-height:18px;color:#4a5359;font-weight:400;transform:scaleX(0.962);transform-origin:0 0;">Transaction currency</div>
<div class="t" style="left:331px;top:287.0px;font-size:13px;line-height:18px;color:#4a5359;font-weight:400;transform:scaleX(0.962);transform-origin:0 0;">PY / Acutal / Budget-Comparison</div>
<div class="t" style="left:331px;top:305.0px;font-size:13px;line-height:18px;color:#4a5359;font-weight:400;transform:scaleX(0.962);transform-origin:0 0;">Personnel expenses per employee</div>
<div class="t" style="left:331px;top:322.0px;font-size:13px;line-height:18px;color:#4a5359;font-weight:400;transform:scaleX(0.962);transform-origin:0 0;">Analysis of differences</div>
<div class="t" style="left:331px;top:340.0px;font-size:13px;line-height:18px;color:#4a5359;font-weight:400;transform:scaleX(0.962);transform-origin:0 0;">Previous months</div>
<div class="t" style="left:331px;top:378.5px;font-size:13px;line-height:18px;color:#4a5359;font-weight:400;transform:scaleX(0.962);transform-origin:0 0;">Standard (Cost units)</div>
<div class="t" style="left:331px;top:396.0px;font-size:13px;line-height:18px;color:#4a5359;font-weight:400;transform:scaleX(0.962);transform-origin:0 0;">WebClient View</div>
<div class="t" style="left:331px;top:413.5px;font-size:13px;line-height:18px;color:#4a5359;font-weight:400;transform:scaleX(0.962);transform-origin:0 0;">Dashboard</div>
<div class="t" style="left:331px;top:431.0px;font-size:13px;line-height:18px;color:#4a5359;font-weight:400;transform:scaleX(0.962);transform-origin:0 0;">Ageing</div>
<svg class="a" style="left:316px;top:361.8px" width="6.6" height="10.6" viewBox="0 0 6.6 10.6"><polyline points="1,1 5.1,5.3 1,9.6" fill="none" stroke="#6f777c" stroke-width="1.6"/></svg>
<svg class="a" style="left:328.5px;top:360px" width="15" height="14" viewBox="0 0 15 14"><path d="M7.20,1.10 L7.59,1.15 L7.97,1.29 L8.31,1.50 L8.63,1.78 L8.90,2.08 L9.15,2.40 L9.37,2.70 L9.58,2.97 L9.81,3.20 L10.05,3.38 L10.33,3.53 L10.65,3.65 L11.00,3.77 L11.37,3.90 L11.75,4.06 L12.11,4.26 L12.43,4.52 L12.70,4.82 L12.88,5.17 L12.97,5.55 L12.98,5.95 L12.89,6.35 L12.74,6.74 L12.54,7.10 L12.32,7.44 L12.10,7.74 L11.90,8.03 L11.74,8.32 L11.63,8.60 L11.57,8.91 L11.54,9.24 L11.54,9.60 L11.53,10.00 L11.50,10.40 L11.43,10.81 L11.31,11.21 L11.11,11.56 L10.85,11.86 L10.53,12.08 L10.16,12.22 L9.75,12.28 L9.34,12.27 L8.93,12.20 L8.54,12.09 L8.17,11.98 L7.83,11.88 L7.51,11.80 L7.20,11.78 L6.89,11.80 L6.57,11.88 L6.23,11.98 L5.86,12.09 L5.47,12.20 L5.06,12.27 L4.65,12.28 L4.24,12.22 L3.87,12.08 L3.55,11.86 L3.29,11.56 L3.09,11.21 L2.97,10.81 L2.90,10.40 L2.87,10.00 L2.86,9.61 L2.86,9.24 L2.83,8.91 L2.77,8.60 L2.66,8.32 L2.50,8.03 L2.30,7.74 L2.08,7.44 L1.86,7.10 L1.66,6.74 L1.51,6.35 L1.42,5.95 L1.43,5.55 L1.52,5.17 L1.70,4.82 L1.97,4.52 L2.29,4.26 L2.65,4.06 L3.03,3.90 L3.40,3.77 L3.75,3.65 L4.07,3.53 L4.35,3.38 L4.59,3.20 L4.82,2.97 L5.03,2.70 L5.25,2.40 L5.50,2.08 L5.77,1.78 L6.09,1.50 L6.43,1.29 L6.81,1.15 L7.20,1.10Z" fill="#f4f4fa" stroke="#767e84" stroke-width="1.5" stroke-linejoin="round"/><circle cx="7.2" cy="7.4" r="1.7" fill="#8486b8" stroke="#a3a6c8" stroke-width="0.8"/></svg>
<div class="t" style="left:350.7px;top:359.0px;font-size:13px;line-height:18px;color:#4a5359;font-weight:400;transform:scaleX(0.962);transform-origin:0 0;">Predictive Analytics</div>
<svg class="a" style="left:300.6px;top:455.2px" width="6.4" height="10.4" viewBox="0 0 6.4 10.4"><polyline points="1,1 4.9,5.2 1,9.4" fill="none" stroke="#6f777c" stroke-width="1.5"/></svg>
<svg class="a" style="left:313.4px;top:454.4px" width="12.9" height="10" viewBox="0 0 12.9 10"><path d="M0,1 Q0,0 1,0 L4,0 L5.2,1.5 L11.9,1.5 Q12.9,1.5 12.9,2.5 L12.9,9 Q12.9,10 11.9,10 L1,10 Q0,10 0,9 Z" fill="#66737b"/></svg>
<div class="r" style="left:331.1px;top:450.6px;width:463px;height:17.4px;background:#b7c8d0"></div>
<div class="t" style="left:334.6px;top:450.5px;font-size:12.4px;line-height:17px;color:#3a4c58;font-weight:400;">Private</div>
<div class="t" style="left:748.7px;top:638.0px;font-size:13.6px;line-height:19px;color:#8658c8;font-weight:700;-webkit-text-stroke:0;transform:scaleX(0.9);transform-origin:0 0;">Configure</div>
</div></body></html>
